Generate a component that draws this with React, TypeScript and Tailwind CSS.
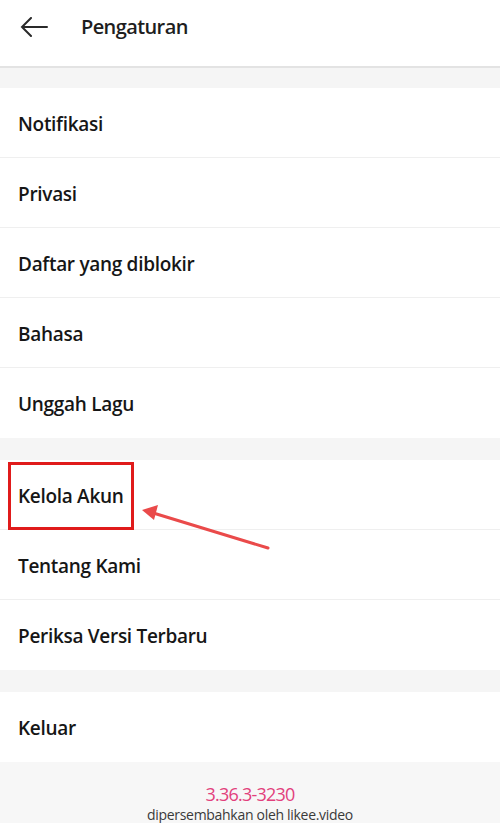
const sections: string[][] = [
  ["Notifikasi", "Privasi", "Daftar yang diblokir", "Bahasa", "Unggah Lagu"],
  ["Kelola Akun", "Tentang Kami", "Periksa Versi Terbaru"],
  ["Keluar"],
];

function Row({ label, last }: { label: string; last: boolean }) {
  const boxed = label === "Kelola Akun";
  return (
    <div
      className={`relative flex h-[70px] items-center bg-white pl-[18px] ${
        last ? "" : "border-b border-[#efefef]"
      }`}
    >
      {boxed && (
        <div className="absolute left-[8px] top-[2px] h-[68px] w-[126px] border-[3px] border-[#e01b1b]" />
      )}
      <span className="pt-[3px] text-[19px] font-semibold tracking-[-0.3px] text-[#161616]">
        {label}
      </span>
      {boxed && (
        <svg
          className="absolute left-[136px] top-[40px] z-10"
          width="140"
          height="50"
          viewBox="0 0 140 50"
        >
          <line
            x1="132"
            y1="48"
            x2="14"
            y2="12"
            stroke="#ea4a4a"
            strokeWidth="3"
            strokeLinecap="round"
          />
          <polygon points="6,10 22,5 18,20" fill="#ea4a4a" />
        </svg>
      )}
    </div>
  );
}

export default function App() {
  return (
    <div
      className="flex h-[823px] w-[500px] flex-col overflow-hidden bg-[#f5f5f5]"
      style={{ fontFamily: "'Open Sans', Lato, sans-serif" }}
    >
      {/* Header */}
      <header className="flex h-[68px] shrink-0 items-center border-b-2 border-[#e3e3e3] bg-white pb-[12px]">
        <svg
          className="ml-[20px]"
          width="28"
          height="20"
          viewBox="0 0 28 20"
          fill="none"
          stroke="#2a2a2a"
          strokeWidth="2"
          strokeLinecap="round"
        >
          <path d="M27 10H2M11 1L2 10l9 9" />
        </svg>
        <h1 className="ml-[33px] text-[20px] font-semibold tracking-[-0.6px] text-[#1e1e1e]">
          Pengaturan
        </h1>
      </header>

      <div className="relative mt-[20px] flex flex-col gap-[22px]">
        {sections.map((items, i) => (
          <section key={i} className="bg-white">
            {items.map((label, j) => (
              <Row key={label} label={label} last={j === items.length - 1} />
            ))}
          </section>
        ))}
      </div>

      {/* Footer */}
      <footer className="flex flex-col items-center bg-[#f7f7f7] pt-[20px]">
        <p className="text-[18px] leading-[24px] tracking-[-0.8px] text-[#e2407c]">
          3.36.3-3230
        </p>
        <p className="text-[14px] leading-[18px] tracking-[-0.3px] text-[#3a3a3a]">
          dipersembahkan oleh likee.video
        </p>
      </footer>
    </div>
  );
}
